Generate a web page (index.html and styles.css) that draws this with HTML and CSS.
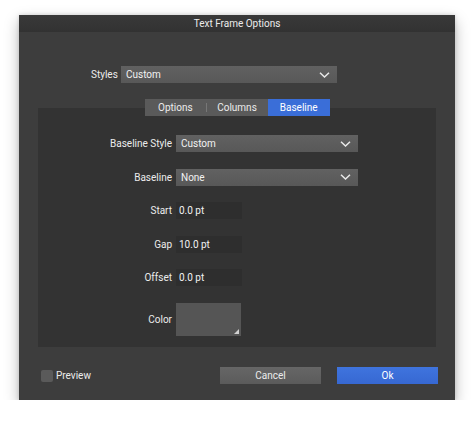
FILE: index.html
```html
<!DOCTYPE html>
<html>
<head>
<meta charset="utf-8">
<link rel="stylesheet" href="styles.css">
</head>
<body>
<div class="stage">
  <div class="window">
    <div class="titlebar">Text Frame Options</div>
    <div class="content">
      <div class="styles-row">
        <span class="styles-label">Styles</span>
        <div class="select select-wide">
          <span>Custom</span>
          <svg class="chev" width="11" height="6" viewBox="0 0 11 6"><path d="M1 0.8 L5.5 5 L10 0.8" fill="none" stroke="#e8e8e8" stroke-width="1.5"/></svg>
        </div>
      </div>
      <div class="tabs">
        <div class="tab">Options</div>
        <div class="tab sep">Columns</div>
        <div class="tab active">Baseline</div>
      </div>
      <div class="panel">
        <div class="form">
          <label class="lbl">Baseline Style</label>
          <div class="select select-mid">
            <span>Custom</span>
            <svg class="chev" width="11" height="6" viewBox="0 0 11 6"><path d="M1 0.8 L5.5 5 L10 0.8" fill="none" stroke="#e8e8e8" stroke-width="1.5"/></svg>
          </div>
          <label class="lbl">Baseline</label>
          <div class="select select-mid">
            <span>None</span>
            <svg class="chev" width="11" height="6" viewBox="0 0 11 6"><path d="M1 0.8 L5.5 5 L10 0.8" fill="none" stroke="#e8e8e8" stroke-width="1.5"/></svg>
          </div>
          <label class="lbl">Start</label>
          <div class="field">0.0 pt</div>
          <label class="lbl">Gap</label>
          <div class="field">10.0 pt</div>
          <label class="lbl">Offset</label>
          <div class="field">0.0 pt</div>
          <label class="lbl">Color</label>
          <div class="swatch"><span class="corner"></span></div>
        </div>
      </div>
      <div class="footer">
        <div class="check"><span class="box"></span><span>Preview</span></div>
        <div class="buttons">
          <div class="btn">Cancel</div>
          <div class="btn primary">Ok</div>
        </div>
      </div>
    </div>
  </div>
</div>
</body>
</html>
```

FILE: styles.css
```css
html, body {
  margin: 0;
  padding: 0;
  background: #ffffff;
}
body {
  font-family: "Roboto", "Liberation Sans", sans-serif;
  font-size: 10px;
  color: #ececec;
}
.stage {
  padding: 15px 0 0 19px;
}
.window {
  width: 436px;
  height: 385px;
  background: #3d3d3d;
  box-shadow: 0 6px 14px rgba(0,0,0,0.28), 0 0 4px rgba(0,0,0,0.15);
  display: flex;
  flex-direction: column;
}
.titlebar {
  height: 17px;
  line-height: 18px;
  text-align: center;
  background: linear-gradient(#393939, #323232);
  color: #ececec;
  font-size: 10px;
}
.content {
  display: flex;
  flex-direction: column;
  padding: 34px 0 0 0;
}
.styles-row {
  display: flex;
  align-items: center;
  padding-left: 72px;
  gap: 4px;
}
.styles-label {
  width: 26px;
  text-align: right;
}
.select {
  height: 17px;
  background: linear-gradient(#616161, #585858);
  display: flex;
  align-items: center;
  justify-content: space-between;
  padding: 0 5px;
  box-sizing: border-box;
  color: #f2f2f2;
}
.select-wide { width: 216px; }
.select-mid { width: 182px; }
.chev { margin-right: 2px; }
.tabs {
  margin: 16px auto 0;
  width: 185px;
  height: 17px;
  display: grid;
  grid-template-columns: 1fr 1fr 1fr;
  background: #5a5a5a;
  position: relative;
  z-index: 1;
}
.tab {
  display: flex;
  align-items: center;
  justify-content: center;
  color: #ececec;
  position: relative;
}
.tab.sep::before {
  content: "";
  position: absolute;
  left: 0;
  top: 4px;
  bottom: 4px;
  width: 1px;
  background: #777;
}
.tab.active {
  background: #3a6ed8;
  color: #ffffff;
}
.panel {
  margin: -8px 19px 0;
  height: 239px;
  background: #333333;
  box-sizing: border-box;
  padding-top: 27px;
}
.form {
  display: grid;
  grid-template-columns: 134px auto;
  column-gap: 4px;
  row-gap: 16.5px;
  align-items: center;
  justify-items: start;
}
.form .lbl {
  justify-self: end;
}
.field {
  width: 66px;
  height: 17px;
  line-height: 17px;
  background: #2e2e2e;
  padding-left: 3px;
  box-sizing: border-box;
  color: #f2f2f2;
}
.swatch {
  width: 65px;
  height: 33px;
  background: #555555;
  position: relative;
}
.corner {
  position: absolute;
  right: 2px;
  bottom: 2px;
  width: 0;
  height: 0;
  border-left: 5px solid transparent;
  border-bottom: 5px solid #d0d0d0;
}
.footer {
  display: flex;
  align-items: center;
  justify-content: space-between;
  padding: 20px 17px 0 22px;
}
.check {
  display: flex;
  align-items: center;
  gap: 3px;
}
.box {
  width: 12px;
  height: 12px;
  background: #5a5a5a;
  border-radius: 2px;
}
.buttons {
  display: flex;
  gap: 16px;
}
.btn {
  width: 101px;
  height: 17px;
  line-height: 17px;
  text-align: center;
  background: linear-gradient(#666666, #5b5b5b);
  color: #ececec;
}
.btn.primary {
  background: linear-gradient(#3f74de, #3768d2);
  color: #ffffff;
}
```
